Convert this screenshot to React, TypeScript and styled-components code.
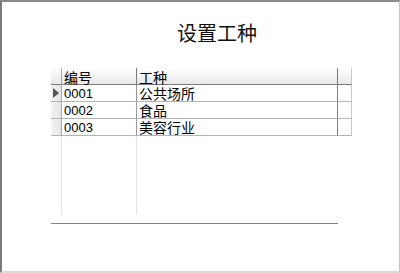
import React from "react";
import styled, { createGlobalStyle } from "styled-components";

const GlobalStyle = createGlobalStyle`
  html, body {
    margin: 0;
    padding: 0;
    background: #ffffff;
  }
  body {
    font-family: "Liberation Sans", "Noto Sans CJK SC", sans-serif;
  }
`;

interface Row {
  code: string;
  name: string;
}

const rows: Row[] = [
  { code: "0001", name: "公共场所" },
  { code: "0002", name: "食品" },
  { code: "0003", name: "美容行业" },
];

const App: React.FC = () => {
  return (
    <>
      <GlobalStyle />
      <Window>
        <Title>设置工种</Title>
        <GridArea>
          <Grid>
            <IndicatorCell $header />
            <HeadCell>编号</HeadCell>
            <HeadCell>工种</HeadCell>
            <TailCell $header />
            {rows.map((row, i) => (
              <React.Fragment key={row.code}>
                <IndicatorCell>
                  {i === 0 && (
                    <svg width="6" height="10" viewBox="0 0 6 10">
                      <path d="M0 0 L6 5 L0 10 Z" fill="#555" />
                    </svg>
                  )}
                </IndicatorCell>
                <CodeCell>{row.code}</CodeCell>
                <NameCell>{row.name}</NameCell>
                <TailCell />
              </React.Fragment>
            ))}
          </Grid>
          <EmptyGrid>
            <EmptyCol />
            <EmptyCol />
          </EmptyGrid>
        </GridArea>
        <Divider />
      </Window>
    </>
  );
};

export default App;

const Window = styled.div`
  box-sizing: border-box;
  width: 400px;
  height: 273px;
  border-top: 2px solid #8a8a8a;
  border-left: 2px solid #7a7a7a;
  border-right: 1px solid #c4c4c4;
  border-bottom: 2px solid #dadada;
  display: flex;
  flex-direction: column;
  padding-left: 49px;
`;

const Title = styled.div`
  margin: 18px 0 0 0;
  padding-left: 76px;
  width: 180px;
  text-align: center;
  font-family: "Noto Sans CJK SC", sans-serif;
  font-size: 20px;
  line-height: 26px;
  color: #111;
`;

const GridArea = styled.div`
  margin-top: 22px;
  display: flex;
  flex-direction: column;
`;

const Grid = styled.div`
  display: grid;
  grid-template-columns: 11px 75px 201px 14px;
  grid-auto-rows: 17px;
  width: 301px;
`;

const IndicatorCell = styled.div<{ $header?: boolean }>`
  box-sizing: border-box;
  background: ${(p) =>
    p.$header
      ? "linear-gradient(#ffffff, #e6e6e6)"
      : "linear-gradient(90deg, #f4f4f4, #e4e4e4)"};
  border-right: 1px solid #a8a8a8;
  border-bottom: 1px solid ${(p) => (p.$header ? "#7c7c7c" : "#b4b4b4")};
  display: flex;
  align-items: center;
  padding-left: 2px;
`;

const HeadCell = styled.div`
  box-sizing: border-box;
  background: linear-gradient(#ffffff, #e8e8e8);
  border-right: 1px solid #7c7c7c;
  border-bottom: 1px solid #7c7c7c;
  font-family: "Noto Sans CJK SC", sans-serif;
  font-size: 14px;
  line-height: 16px;
  padding-left: 2px;
  padding-top: 1px;
  color: #000;
  white-space: nowrap;
`;

const BodyCell = styled.div`
  box-sizing: border-box;
  border-right: 1px solid #9a9a9a;
  border-bottom: 1px solid #b4b4b4;
  padding-left: 2px;
  color: #000;
  white-space: nowrap;
`;

const CodeCell = styled(BodyCell)`
  font-family: "Liberation Sans", sans-serif;
  font-size: 13px;
  line-height: 16px;
  padding-top: 1px;
`;

const NameCell = styled(BodyCell)`
  font-family: "Noto Sans CJK SC", sans-serif;
  font-size: 14px;
  line-height: 16px;
  border-right-color: #7c7c7c;
`;

const TailCell = styled.div<{ $header?: boolean }>`
  box-sizing: border-box;
  background: ${(p) => (p.$header ? "linear-gradient(#ffffff, #e8e8e8)" : "#ffffff")};
  border-right: 1px solid #c8c8c8;
  border-bottom: 1px solid ${(p) => (p.$header ? "#7c7c7c" : "#b4b4b4")};
`;

const EmptyGrid = styled.div`
  display: grid;
  grid-template-columns: 11px 75px;
  height: 78px;
`;

const EmptyCol = styled.div`
  border-right: 1px solid #e2e2e2;
`;

const Divider = styled.div`
  margin-top: 9px;
  width: 287px;
  height: 1px;
  background: #808080;
`;
